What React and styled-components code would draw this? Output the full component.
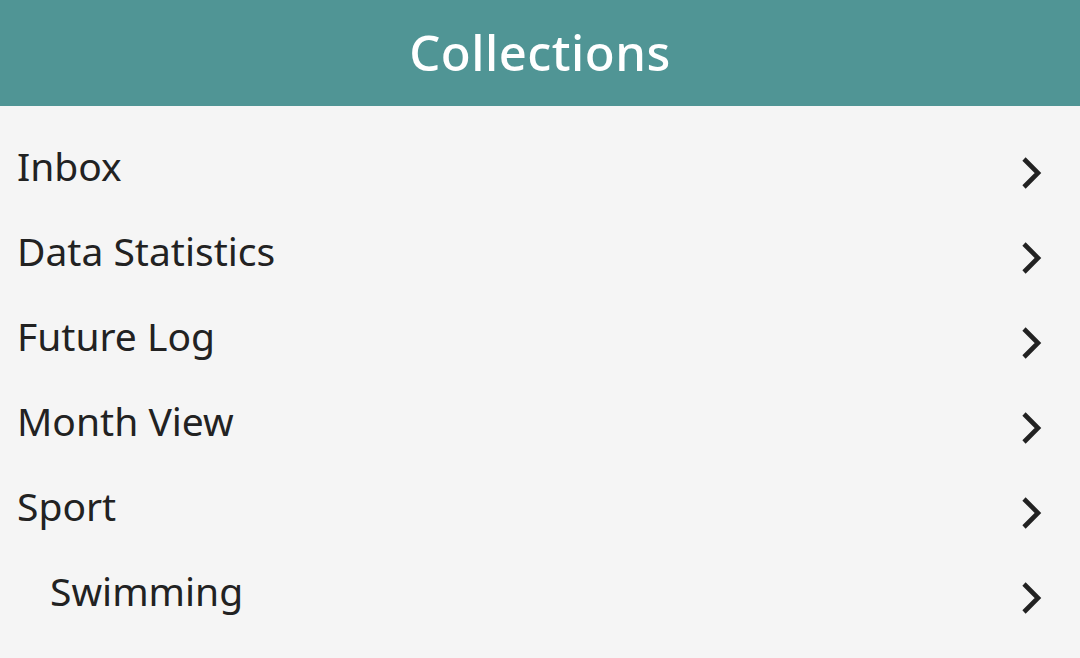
import React from "react";
import styled, { createGlobalStyle } from "styled-components";

const Global = createGlobalStyle`
  html, body { margin: 0; padding: 0; background: #f5f5f5; }
  body { font-family: "Noto Sans", "Open Sans", sans-serif; }
`;

const Page = styled.div`
  width: 1080px;
  min-height: 658px;
  background: #f5f5f5;
`;

const Header = styled.header`
  height: 106px;
  background: #509595;
  display: flex;
  align-items: center;
  justify-content: center;
`;

const Title = styled.h1`
  margin: 0 0 3px;
  color: #ffffff;
  font-size: 49px;
  font-weight: 500;
  letter-spacing: 0.5px;
`;

const List = styled.ul`
  list-style: none;
  margin: 0;
  padding: 17px 0 0;
`;

const Row = styled.li`
  height: 85px;
  display: flex;
  align-items: center;
  justify-content: space-between;
  padding: 0 36px 0 ${(p) => (p.$indent ? 50 : 17)}px;
`;

const Label = styled.span`
  color: #222222;
  font-size: 39px;
  font-weight: 400;
`;

const Chevron = styled.svg`
  width: 24px;
  height: 36px;
  margin-top: 14px;
  flex-shrink: 0;
`;

const items = [
  { label: "Inbox" },
  { label: "Data Statistics" },
  { label: "Future Log" },
  { label: "Month View" },
  { label: "Sport" },
  { label: "Swimming", indent: true },
];

export default function App() {
  return (
    <Page>
      <Global />
      <Header>
        <Title>Collections</Title>
      </Header>
      <List>
        {items.map((it) => (
          <Row key={it.label} $indent={it.indent}>
            <Label>{it.label}</Label>
            <Chevron viewBox="0 0 24 36">
              <path d="M4 4 L18 18 L4 32" fill="none" stroke="#222" strokeWidth="4.6" />
            </Chevron>
          </Row>
        ))}
      </List>
    </Page>
  );
}
